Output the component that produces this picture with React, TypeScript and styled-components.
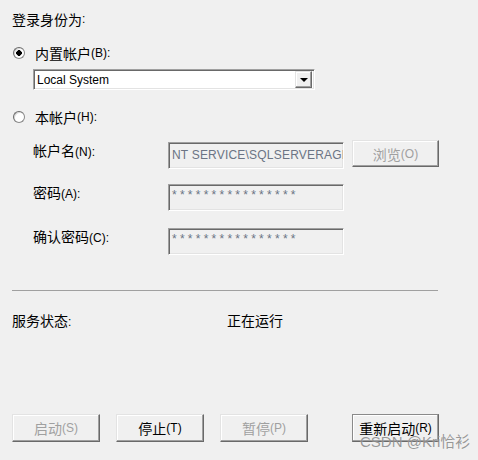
import React from "react";
import styled, { createGlobalStyle } from "styled-components";

const Global = createGlobalStyle`
  html, body { margin: 0; padding: 0; background: #f0f0f0; }
  body { font-family: "Liberation Sans", "Noto Sans CJK SC", sans-serif; color: #000; }
`;

const Page = styled.div`
  position: relative;
  width: 478px;
  height: 460px;
  box-sizing: border-box;
  padding: 9px 39px 0 12px;
  display: flex;
  flex-direction: column;
  overflow: hidden;
`;

const Cjk = styled.span<{ $disabled?: boolean }>`
  font-family: "Noto Sans CJK SC", sans-serif;
  font-size: 14px;
  color: ${(p) => (p.$disabled ? "#a0a0a0" : "#000")};
`;

const Key = styled.span<{ $disabled?: boolean }>`
  font-family: "Liberation Sans", sans-serif;
  font-size: 12px;
  color: ${(p) => (p.$disabled ? "#a0a0a0" : "#000")};
`;

const Line = styled.div<{ $mt?: number; $indent?: number }>`
  height: 20px;
  line-height: 20px;
  margin-top: ${(p) => p.$mt ?? 0}px;
  margin-left: ${(p) => p.$indent ?? 0}px;
  display: flex;
  align-items: center;
  white-space: nowrap;
`;

const Radio = styled.span<{ $checked?: boolean }>`
  width: 12px;
  height: 12px;
  box-sizing: border-box;
  border-radius: 50%;
  border: 1px solid #8a8a8a;
  border-top-color: #6a6a6a;
  border-left-color: #6a6a6a;
  background: radial-gradient(circle, ${(p) => (p.$checked ? "#000 0 2.6px, #fff 3px" : "#fff 0")});
  box-shadow: inset 1px 1px 0 #d8d8d8;
  margin-left: 1px;
  margin-right: 10px;
  flex: none;
`;

const Combo = styled.div`
  margin-top: 6px;
  margin-left: 21px;
  width: 282px;
  height: 21px;
  box-sizing: border-box;
  background: #fff;
  border: 1px solid;
  border-color: #a0a0a0 #fff #fff #a0a0a0;
  box-shadow: inset 1px 1px 0 #696969, inset -1px -1px 0 #e3e3e3;
  display: flex;
  align-items: center;
  padding: 0 2px 0 2px;
`;

const ComboText = styled.span`
  flex: 1;
  font-size: 12px;
  padding-left: 1px;
`;

const DropButton = styled.span`
  width: 17px;
  height: 17px;
  box-sizing: border-box;
  background: #f0f0f0;
  border: 1px solid;
  border-color: #e3e3e3 #696969 #696969 #e3e3e3;
  box-shadow: inset -1px -1px 0 #a0a0a0, inset 1px 1px 0 #fff;
  display: flex;
  align-items: center;
  justify-content: center;
`;

const FieldRow = styled.div<{ $mt: number }>`
  margin-top: ${(p) => p.$mt}px;
  margin-left: 21px;
  display: grid;
  grid-template-columns: 127px 176px 87px;
  column-gap: 8px;
  align-items: start;
`;

const FieldLabel = styled.div`
  height: 20px;
  line-height: 20px;
  white-space: nowrap;
`;

const TextBox = styled.div<{ $password?: boolean }>`
  margin-top: 2px;
  height: 27px;
  box-sizing: border-box;
  background: #f0f0f0;
  border: 1px solid;
  border-color: #a0a0a0 #fff #fff #a0a0a0;
  box-shadow: inset 1px 1px 0 #696969, inset -1px -1px 0 #e3e3e3;
  overflow: hidden;
  white-space: nowrap;
  padding: ${(p) => (p.$password ? "2px 3px" : "4px 3px")};
  font-size: 12px;
  line-height: 16px;
  color: #6b7484;
  letter-spacing: ${(p) => (p.$password ? "3.25px" : "0.2px")};
`;

const Button = styled.button<{ $default?: boolean }>`
  width: ${(p) => (p.$default ? 87 : 88)}px;
  height: 28px;
  box-sizing: border-box;
  padding: 0;
  background: #f0f0f0;
  border: 1px solid;
  border-color: ${(p) => (p.$default ? "#8a8a8a #696969 #696969 #8a8a8a" : "#e3e3e3 #696969 #696969 #e3e3e3")};
  box-shadow: inset -1px -1px 0 #a0a0a0, inset 1px 1px 0 #fff;
  display: flex;
  align-items: center;
  justify-content: center;
  white-space: nowrap;
  font-family: inherit;
`;

const SmallButton = styled(Button)`
  height: 27px;
  width: 87px;
`;

const Separator = styled.div`
  margin-top: 35px;
  height: 1px;
  width: 426px;
  background: #a0a0a0;
`;

const StatusRow = styled.div`
  margin-top: 19px;
  display: grid;
  grid-template-columns: 215px 1fr;
  height: 20px;
  line-height: 20px;
`;

const ButtonBar = styled.div`
  margin-top: 84px;
  display: flex;
  gap: 16px;
  width: 427px;
  & > :last-child { margin-left: auto; }
`;

const Watermark = styled.div`
  position: absolute;
  left: 360px;
  top: 432px;
  font-family: "Liberation Sans", "Noto Sans CJK SC", sans-serif;
  font-size: 15px;
  line-height: 20px;
  color: rgba(120, 120, 120, 0.75);
  text-shadow: 0 0 1px rgba(255, 255, 255, 0.6);
  white-space: nowrap;
  pointer-events: none;
`;

const Label = ({ cn, k, disabled }: { cn: string; k?: string; disabled?: boolean }) => (
  <>
    <Cjk $disabled={disabled}>{cn}</Cjk>
    {k && <Key $disabled={disabled}>{k}</Key>}
  </>
);

export default function App() {
  return (
    <>
      <Global />
      <Page>
        <Line>
          <Label cn="登录身份为" k=":" />
        </Line>
        <Line $mt={14}>
          <Radio $checked />
          <Label cn="内置帐户" k="(B):" />
        </Line>
        <Combo>
          <ComboText>Local System</ComboText>
          <DropButton>
            <svg width="8" height="4" viewBox="0 0 8 4">
              <path d="M0 0H8L4 4Z" fill="#000" />
            </svg>
          </DropButton>
        </Combo>
        <Line $mt={17}>
          <Radio />
          <Label cn="本帐户" k="(H):" />
        </Line>
        <FieldRow $mt={13}>
          <FieldLabel>
            <Label cn="帐户名" k="(N):" />
          </FieldLabel>
          <TextBox>NT SERVICE\SQLSERVERAGENT</TextBox>
          <SmallButton disabled>
            <Label cn="浏览" k="(O)" disabled />
          </SmallButton>
        </FieldRow>
        <FieldRow $mt={13}>
          <FieldLabel>
            <Label cn="密码" k="(A):" />
          </FieldLabel>
          <TextBox $password>****************</TextBox>
        </FieldRow>
        <FieldRow $mt={15}>
          <FieldLabel>
            <Label cn="确认密码" k="(C):" />
          </FieldLabel>
          <TextBox $password>****************</TextBox>
        </FieldRow>
        <Separator />
        <StatusRow>
          <span>
            <Label cn="服务状态" k=":" />
          </span>
          <span>
            <Cjk>正在运行</Cjk>
          </span>
        </StatusRow>
        <ButtonBar>
          <Button disabled>
            <Label cn="启动" k="(S)" disabled />
          </Button>
          <Button>
            <Label cn="停止" k="(T)" />
          </Button>
          <Button disabled>
            <Label cn="暂停" k="(P)" disabled />
          </Button>
          <Button $default>
            <Label cn="重新启动" k="(R)" />
          </Button>
        </ButtonBar>
        <Watermark>CSDN @Kri恰衫</Watermark>
      </Page>
    </>
  );
}
